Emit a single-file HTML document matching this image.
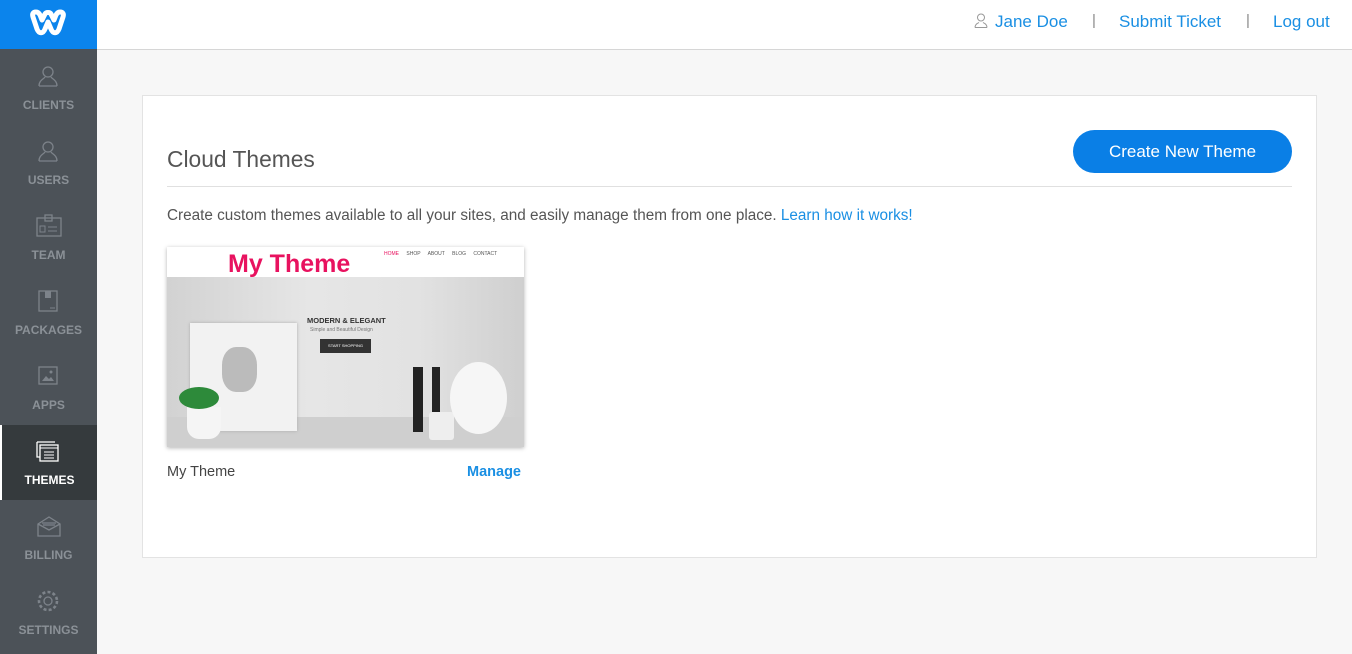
<!DOCTYPE html>
<html><head><meta charset="utf-8"><style>
*{margin:0;padding:0;box-sizing:border-box}
body{width:1352px;height:654px;background:#f7f7f7;font-family:"Liberation Sans",sans-serif;position:relative;overflow:hidden}
.top{position:absolute;left:97px;top:0;right:0;height:50px;background:#fff;border-bottom:1px solid #d6d6d6}
.logo{position:absolute;left:0;top:0;width:97px;height:49px;background:#0b84ec}
.side{position:absolute;left:0;top:49px;width:97px;bottom:0;background:#4c5258}
.item{position:absolute;left:0;width:97px;height:75px;text-align:center;color:#8b9197;font-size:12px;font-weight:bold}
.item svg{position:absolute;left:36px;top:14px}
.item span{position:absolute;left:0;right:0;top:47px}
.item.act{background:#353a3d;color:#fff;border-left:2px solid #fff}
.nav{position:absolute;top:12px;font-size:17px;color:#1a8fe3}
.sep{position:absolute;top:12px;font-size:15px;color:#888}
.card{position:absolute;left:142px;top:95px;width:1175px;height:463px;background:#fff;border:1px solid #e3e3e3}
</style></head><body>
<div class="logo"><svg width="97" height="49" viewBox="0 0 97 49"><path d="M36 12 C33 12 32 14 33 17 L37 29 C39 34 43 34 45 29 L48 22 L51 29 C53 34 57 34 59 29 L63 17 C64 14 63 12 60 12 C58 12 57 13 56 15 L54 20 L51 14 C50 12 46 12 45 14 L42 20 L40 15 C39 13 38 12 36 12Z" fill="none" stroke="#fff" stroke-width="5" stroke-linejoin="round"/></svg></div>
<div class="top"></div>
<svg style="position:absolute;left:974px;top:13px" width="14" height="15" viewBox="0 0 14 15"><circle cx="7" cy="4.5" r="3.5" fill="none" stroke="#999"/><path d="M1 14.5 C1 11 4 10 5 9.5 M13 14.5 C13 11 10 10 9 9.5 M1 14.5 H13" fill="none" stroke="#999"/></svg>
<div class="nav" style="left:995px">Jane Doe</div>
<div class="sep" style="left:1092px">|</div>
<div class="nav" style="left:1119px">Submit Ticket</div>
<div class="sep" style="left:1246px">|</div>
<div class="nav" style="left:1273px">Log out</div>
<div class="side">
<div class="item" style="top:1px"><svg width="24" height="24" viewBox="0 0 24 24"><circle cx="12" cy="8" r="5" fill="none" stroke="#7d838a" stroke-width="1.3"/><path d="M3 22 C3 16 8 15 9 13 M21 22 C21 16 16 15 15 13 M3 22H21" fill="none" stroke="#7d838a" stroke-width="1.3"/></svg><span style="top:48px">CLIENTS</span></div>
<div class="item" style="top:76px"><svg width="24" height="24" viewBox="0 0 24 24"><circle cx="12" cy="8" r="5" fill="none" stroke="#7d838a" stroke-width="1.3"/><path d="M3 22 C3 16 8 15 9 13 M21 22 C21 16 16 15 15 13 M3 22H21" fill="none" stroke="#7d838a" stroke-width="1.3"/></svg><span style="top:48px">USERS</span></div>
<div class="item" style="top:151px"><svg width="26" height="24" viewBox="0 0 26 24"><rect x="1" y="4" width="24" height="18" fill="none" stroke="#7d838a" stroke-width="1.3"/><rect x="9" y="1" width="7" height="6" fill="none" stroke="#7d838a" stroke-width="1.3"/><rect x="4" y="12" width="5" height="6" fill="none" stroke="#7d838a"/><path d="M12 13H21M12 17H21" stroke="#7d838a"/></svg><span style="top:48px">TEAM</span></div>
<div class="item" style="top:226px"><svg width="24" height="24" viewBox="0 0 24 24"><rect x="3" y="2" width="18" height="20" fill="none" stroke="#7d838a" stroke-width="1.3"/><rect x="9" y="2" width="6" height="7" fill="#7d838a"/><path d="M14 19H19" stroke="#7d838a"/></svg><span style="top:48px">PACKAGES</span></div>
<div class="item" style="top:301px"><svg width="24" height="24" viewBox="0 0 24 24"><rect x="3" y="3" width="18" height="17" fill="none" stroke="#7d838a" stroke-width="1.3"/><path d="M6 17L10 12L13 15L15 13L18 17Z" fill="#7d838a"/><circle cx="15" cy="8" r="1.5" fill="#7d838a"/></svg><span style="top:48px">APPS</span></div>
<div class="item act" style="top:376px"><svg width="24" height="24" viewBox="0 0 24 24" style="left:34px"><path d="M1 3H19M1 3V18H4" fill="none" stroke="#fff" stroke-width="1.3"/><rect x="4" y="6" width="18" height="16" fill="none" stroke="#fff" stroke-width="1.3"/><path d="M4 9H22M8 13H18M8 16H18M8 19H18" stroke="#fff"/></svg><span style="top:48px">THEMES</span></div>
<div class="item" style="top:451px"><svg width="26" height="24" viewBox="0 0 26 24"><path d="M2 10L13 3L24 10V22H2Z M2 10L13 16L24 10 M6 9H20M7 11H19" fill="none" stroke="#7d838a" stroke-width="1.3"/></svg><span style="top:48px">BILLING</span></div>
<div class="item" style="top:526px"><svg width="24" height="24" viewBox="0 0 24 24"><circle cx="12" cy="12" r="4" fill="none" stroke="#7d838a" stroke-width="1.3"/><circle cx="12" cy="12" r="9" fill="none" stroke="#7d838a" stroke-width="2.6" stroke-dasharray="3 2.2"/></svg><span style="top:48px">SETTINGS</span></div>
</div>
<div class="card">
<div style="position:absolute;left:24px;top:50px;font-size:22.8px;color:#555">Cloud Themes</div>
<div style="position:absolute;left:930px;top:34px;width:219px;height:43px;border-radius:22px;background:#0a7fe6;color:#fff;font-size:17px;text-align:center;line-height:43px">Create New Theme</div>
<div style="position:absolute;left:24px;top:90px;width:1125px;height:1px;background:#e0e0e0"></div>
<div style="position:absolute;left:24px;top:111px;font-size:15.3px;color:#555;white-space:nowrap">Create custom themes available to all your sites, and easily manage them from one place. <span style="color:#1a8fe3">Learn how it works!</span></div>
<div style="position:absolute;left:24px;top:151px;width:357px;height:200px;box-shadow:0 1px 4px rgba(0,0,0,.3);background:linear-gradient(90deg,#d2d2d2,#e6e6e6 40%,#e2e2e2 70%,#cfcfcf);overflow:hidden">
 <div style="position:absolute;left:0;top:0;right:0;height:30px;background:#fff"></div>
 <div style="position:absolute;left:61px;top:3px;font-size:25px;font-weight:bold;color:#e8125f">My Theme</div>
 <div style="position:absolute;left:217px;top:4px;font-size:5px;color:#555;word-spacing:6px"><span style="color:#e8125f">HOME</span> SHOP ABOUT BLOG CONTACT</div>
 <div style="position:absolute;left:0;right:0;top:170px;bottom:0;background:#cfcfcf"></div>
 <div style="position:absolute;left:23px;top:76px;width:107px;height:108px;background:#f2f2f2;box-shadow:0 0 3px #aaa"></div>
 <div style="position:absolute;left:55px;top:100px;width:35px;height:45px;background:#bbb;border-radius:40%"></div>
 <div style="position:absolute;left:20px;top:160px;width:34px;height:32px;background:#f5f5f5;border-radius:0 0 12px 12px"></div>
 <div style="position:absolute;left:12px;top:140px;width:40px;height:22px;background:#2d8a3a;border-radius:50%"></div>
 <div style="position:absolute;left:140px;top:69px;font-size:7.5px;font-weight:bold;color:#333">MODERN &amp; ELEGANT</div>
 <div style="position:absolute;left:143px;top:80px;font-size:5px;color:#777">Simple and Beautiful Design</div>
 <div style="position:absolute;left:153px;top:92px;width:51px;height:14px;background:#333;color:#fff;font-size:4px;text-align:center;line-height:14px">START SHOPPING</div>
 <div style="position:absolute;left:246px;top:120px;width:10px;height:65px;background:#222"></div>
 <div style="position:absolute;left:265px;top:120px;width:8px;height:50px;background:#222"></div>
 <div style="position:absolute;left:262px;top:165px;width:25px;height:28px;background:#eee;border-radius:3px"></div>
 <div style="position:absolute;left:283px;top:115px;width:57px;height:72px;background:#f6f6f6;border-radius:50%"></div>
</div>
<div style="position:absolute;left:24px;top:368px;font-size:14.5px;color:#444">My Theme</div>
<div style="position:absolute;left:324px;top:368px;font-size:14.5px;color:#1a8fe3;font-weight:bold">Manage</div>
</div>
</body></html>
